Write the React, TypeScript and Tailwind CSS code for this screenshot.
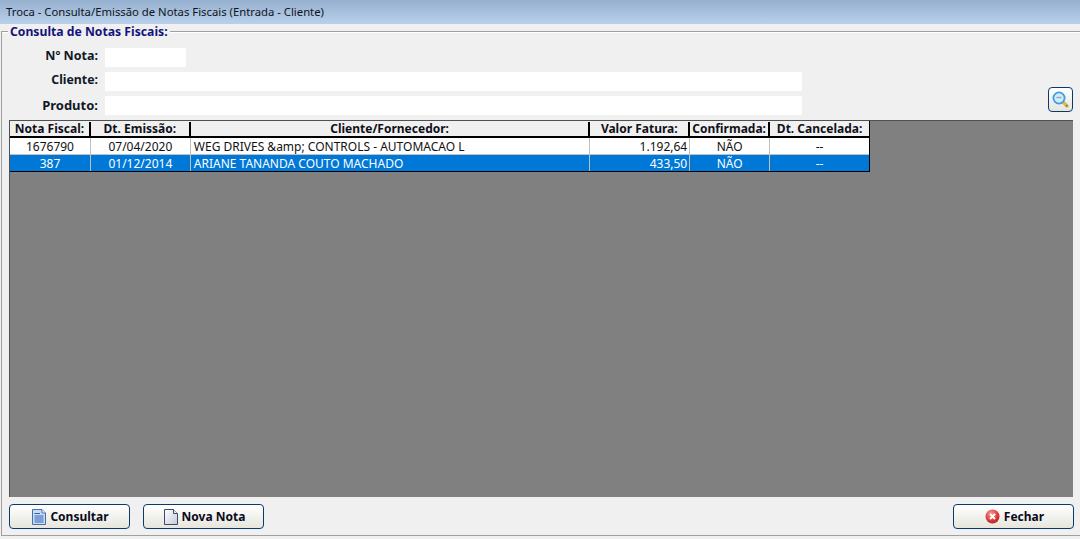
const columns = [
  { title: 'Nota Fiscal:', width: 'w-[81px]' },
  { title: 'Dt. Emissão:', width: 'w-[100px]' },
  { title: 'Cliente/Fornecedor:', width: 'w-[400px]' },
  { title: 'Valor Fatura:', width: 'w-[100px]' },
  { title: 'Confirmada:', width: 'w-[80px]' },
  { title: 'Dt. Cancelada:', width: 'w-[99px]' },
]

const rows = [
  { nota: '1676790', emissao: '07/04/2020', cliente: 'WEG DRIVES &amp; CONTROLS - AUTOMACAO L', valor: '1.192,64', confirmada: 'NÃO', cancelada: '--' },
  { nota: '387', emissao: '01/12/2014', cliente: 'ARIANE TANANDA COUTO MACHADO', valor: '433,50', confirmada: 'NÃO', cancelada: '--', selected: true },
]

function DocIcon() {
  return (
    <svg width="14" height="16" viewBox="0 0 14 16">
      <path d="M.5 .5H10L13.5 4V15.5H.5Z" fill="#c9dcf5" stroke="#4a6fa8" />
      <path d="M10 .5V4H13.5" fill="#fff" stroke="#4a6fa8" />
      <path d="M2.5 4.5H8M2.5 7H11.5M2.5 9H11.5M2.5 11H11.5M2.5 13H11.5" stroke="#2f62b5" />
    </svg>
  )
}

function BlankIcon() {
  return (
    <svg width="14" height="16" viewBox="0 0 14 16">
      <defs>
        <linearGradient id="blank" x1="0" y1="0" x2="1" y2="1">
          <stop offset="0" stopColor="#ffffff" />
          <stop offset="1" stopColor="#c3cbdc" />
        </linearGradient>
      </defs>
      <path d="M.5 .5H9.5L13.5 4.5V15.5H.5Z" fill="url(#blank)" stroke="#3d4a66" />
      <path d="M9.5 .5V4.5H13.5" fill="#eef1f6" stroke="#3d4a66" />
    </svg>
  )
}

function CloseIcon() {
  return (
    <svg width="15" height="15" viewBox="0 0 15 15">
      <defs>
        <radialGradient id="red" cx="0.4" cy="0.3" r="0.8">
          <stop offset="0" stopColor="#f59a9a" />
          <stop offset="0.6" stopColor="#dd3a3a" />
          <stop offset="1" stopColor="#a81c1c" />
        </radialGradient>
      </defs>
      <circle cx="7.5" cy="7.5" r="7" fill="url(#red)" />
      <path d="M5 5L10 10M10 5L5 10" stroke="#fff" strokeWidth="2" />
    </svg>
  )
}

function SearchIcon() {
  return (
    <svg width="18" height="18" viewBox="0 0 18 18">
      <path d="M10.5 10.5L15 15" stroke="#e8b93a" strokeWidth="3.4" strokeLinecap="round" />
      <path d="M14 15.5L15.5 14" stroke="#3a86d8" strokeWidth="1.6" />
      <circle cx="7" cy="7" r="5.6" fill="#d3ecfb" stroke="#3c9fe6" strokeWidth="1.8" />
      <path d="M4.5 6.5H9.5" stroke="#8fa6bd" strokeWidth="1.4" />
    </svg>
  )
}

function ActionButton({ label, icon }: { label: string; icon: React.ReactNode }) {
  return (
    <button className="flex h-[25px] w-[121px] items-center justify-center gap-[4px] rounded-[4px] border border-[#0a3a6b] bg-gradient-to-b from-[#ffffff] to-[#e6e6dd] pl-[2px] text-[12px] font-bold text-[#0a0a20]">
      {icon}
      {label}
    </button>
  )
}

function FormRow({ label, inputWidth, rowClass, labelClass }: { label: string; inputWidth: string; rowClass: string; labelClass: string }) {
  return (
    <div className={`flex h-[19px] items-center ${rowClass}`}>
      <span className={`w-[89px] text-right font-bold text-[#111827] ${labelClass}`}>{label}</span>
      <div className={`ml-[7px] h-[19px] bg-white ${inputWidth}`} />
    </div>
  )
}

export default function App() {
  return (
    <div className="flex h-[539px] w-[1080px] flex-col overflow-hidden bg-[#f0f0f0] font-['Noto_Sans',sans-serif] text-[12px]">
      <div className="flex h-[24px] shrink-0 items-center bg-gradient-to-b from-[#95afce] to-[#b9d1eb] pl-[6px] text-[11.3px] text-[#10141c]">
        Troca - Consulta/Emissão de Notas Fiscais (Entrada - Cliente)
      </div>

      <fieldset className="mb-[3px] ml-[1px] flex min-h-0 flex-1 flex-col border-y border-l border-[#a0a0a0] pr-[6px] pb-[6px] pl-[7px] shadow-[inset_0_1px_0_#ffffff]">
        <legend className="ml-[-1px] bg-[#f0f0f0] px-[2px] pt-[1px] text-[12.2px] leading-[14px] font-bold text-[#14147d]">Consulta de Notas Fiscais:</legend>

        <div className="mt-[9px] mr-[1px] flex items-end justify-between">
          <div>
            <FormRow label="Nº Nota:" inputWidth="w-[81px]" rowClass="" labelClass="mb-[3px] text-[12.5px]" />
            <FormRow label="Cliente:" inputWidth="w-[697px]" rowClass="mt-[5px]" labelClass="mb-[3px] text-[12.3px]" />
            <FormRow label="Produto:" inputWidth="w-[697px]" rowClass="mt-[5px]" labelClass="text-[13px]" />
          </div>
          <button className="mb-[3px] flex h-[25px] w-[25px] items-center justify-center rounded-[4px] border border-[#0a3a6b] bg-gradient-to-b from-[#ffffff] to-[#e6e6dd]">
            <SearchIcon />
          </button>
        </div>

        <div className="mt-[5px] mr-[1px] min-h-0 flex-1 border-t border-l border-[#505050] bg-[#808080]">
          <div className="w-[860px] border-r border-b border-black">
            <div className="flex h-[17px] border-b-2 border-black bg-[#f0f0f0] pt-[1px]">
              {columns.map((col) => (
                <div key={col.title} className={`${col.width} flex items-center justify-center border-r-2 border-black font-bold whitespace-nowrap text-[#10101a] last:border-r-0`}>
                  {col.title}
                </div>
              ))}
            </div>
            {rows.map((row) => {
              const cellClass = `flex items-center border-r border-[#c0c0c0] pt-[1px] ${row.selected ? 'text-white' : 'text-[#111]'}`
              return (
                <div key={row.nota} className={`flex ${row.selected ? 'h-[16px] bg-[#0078d7]' : 'h-[17px] border-b border-[#c0c0c0] bg-white'}`}>
                  <div className={`${cellClass} w-[81px] justify-center`}>{row.nota}</div>
                  <div className={`${cellClass} w-[100px] justify-center`}>{row.emissao}</div>
                  <div className={`${cellClass} w-[400px] pl-[3px]`}>{row.cliente}</div>
                  <div className={`${cellClass} w-[100px] justify-end pr-[2px]`}>{row.valor}</div>
                  <div className={`${cellClass} w-[80px] justify-center`}>{row.confirmada}</div>
                  <div className={`${cellClass} w-[99px] justify-center border-r-0`}>{row.cancelada}</div>
                </div>
              )
            })}
          </div>
        </div>

        <div className="mt-[7px] flex shrink-0">
          <ActionButton label="Consultar" icon={<DocIcon />} />
          <div className="ml-[13px]">
            <ActionButton label="Nova Nota" icon={<BlankIcon />} />
          </div>
          <div className="ml-auto">
            <ActionButton label="Fechar" icon={<CloseIcon />} />
          </div>
        </div>
      </fieldset>
    </div>
  )
}
